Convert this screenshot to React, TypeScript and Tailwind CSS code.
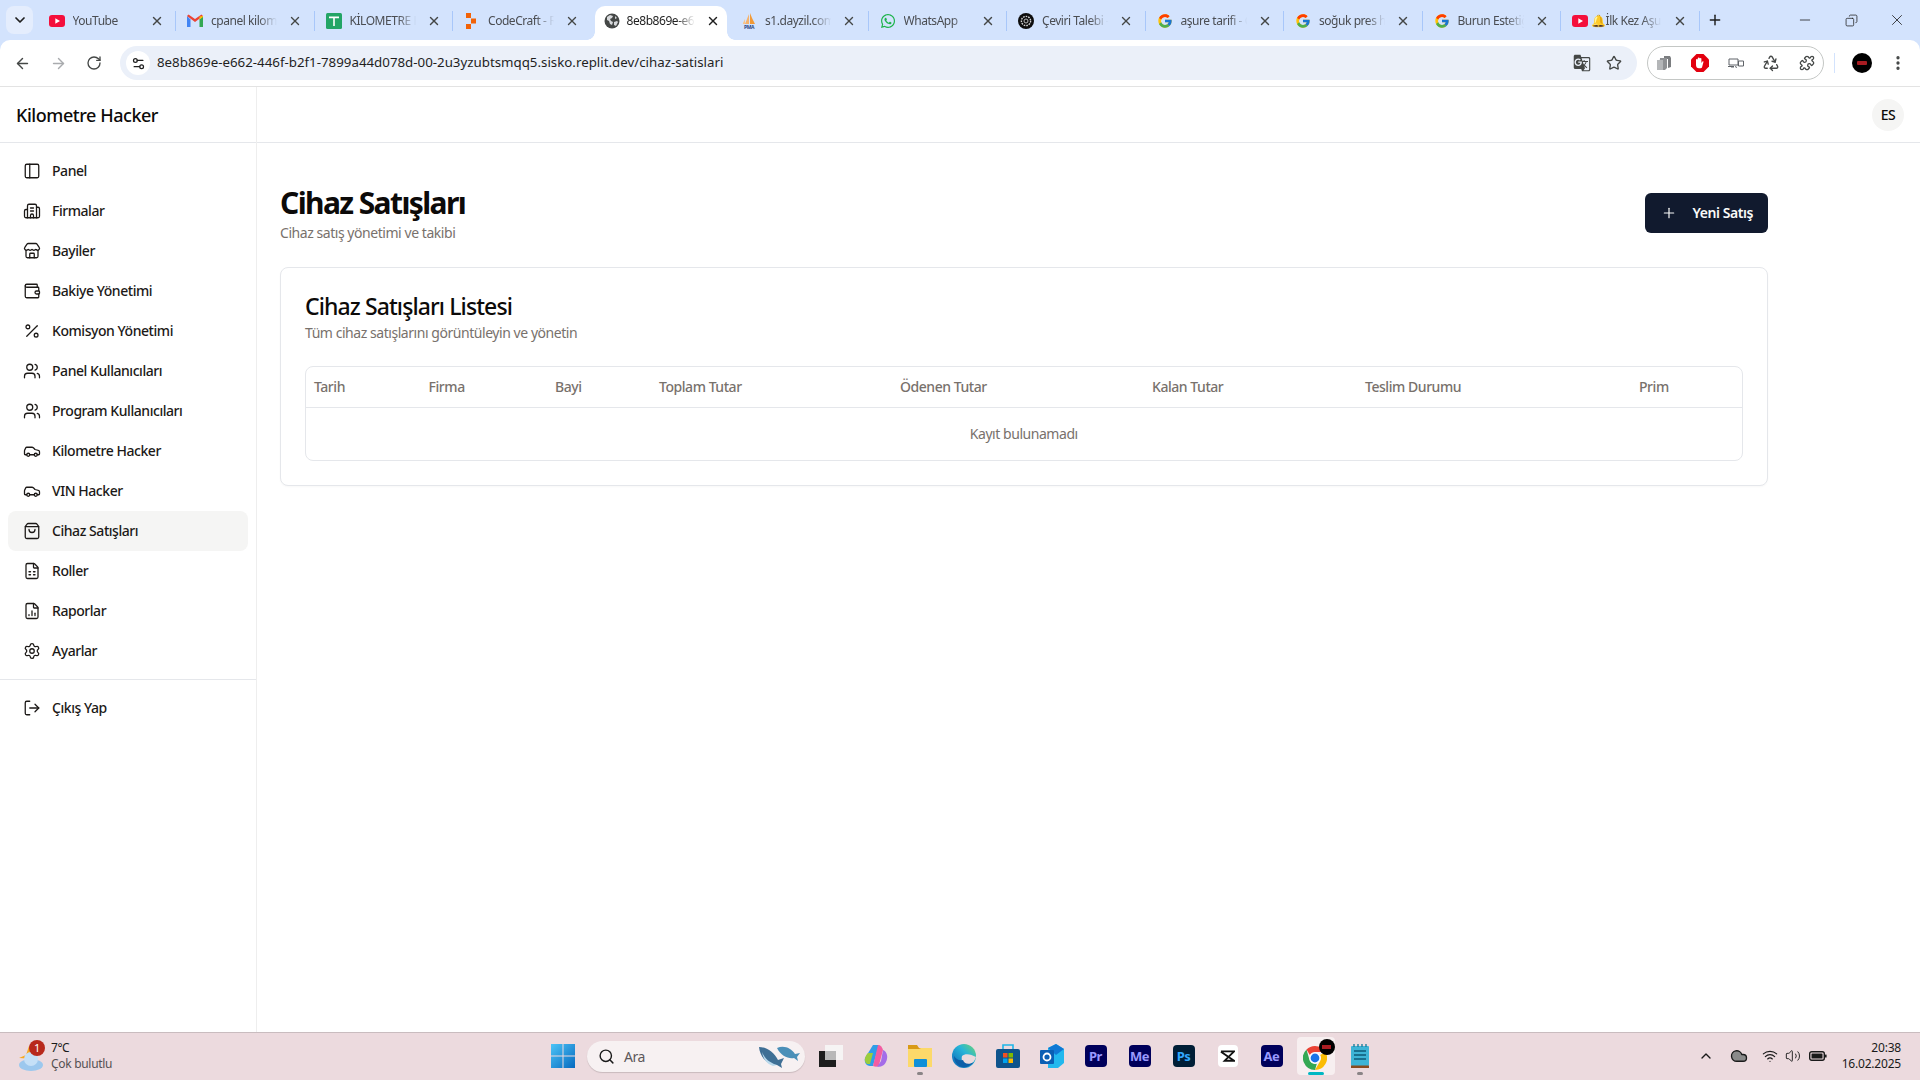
import React from "react";
import {
  ArrowLeft, ArrowRight, Building2, Car, ChevronDown, ChevronUp, Cloud, Copy, FileChartColumn, FileSpreadsheet,
  LogOut, Minus, PanelLeft, Percent, Plus, Puzzle, Recycle, RotateCw, Search, Settings, Settings2, ShoppingBag,
  Star, Store, Users, Volume2, Wallet, Wifi, X, MoreVertical,
} from "lucide-react";
import { FcGoogle } from "react-icons/fc";
import { FaWhatsapp } from "react-icons/fa";
import { MdGTranslate } from "react-icons/md";

const YouTubeIcon = () => (
  <svg viewBox="0 0 16 16" className="h-4 w-4 shrink-0">
    <rect y="2" width="16" height="12" rx="3" fill="#f40f3c" />
    <path d="M6.3 5.2v5.6L11 8z" fill="#fff" />
  </svg>
);

const GmailIcon = () => (
  <svg viewBox="0 0 16 16" className="h-4 w-4 shrink-0">
    <path d="M0 3v11h3.500V6.500z" fill="#4285f4" />
    <path d="M16 3v11h-3.500V6.500z" fill="#34a853" />
    <path d="M0 3l8 6 8-6-1.500-1.500L8 6 1.500 1.500z" fill="#ea4335" />
    <path d="M12.500 3.500L16 3v1l-3.500 2.500z" fill="#fbbc04" />
  </svg>
);

const SheetIcon = () => (
  <svg viewBox="0 0 16 16" className="h-4 w-4 shrink-0">
    <rect width="16" height="16" rx="1.500" fill="#23a566" />
    <path d="M3 3.500h10v1.700H8.800V13H7.200V5.200H3z" fill="#fff" />
  </svg>
);

const CodeCraftIcon = () => (
  <svg viewBox="0 0 16 16" className="h-4 w-4 shrink-0">
    <rect x="2" y="0" width="5" height="5" fill="#f26207" />
    <rect x="7" y="5.500" width="5" height="5" fill="#f26207" />
    <rect x="2" y="11" width="5" height="5" fill="#f26207" />
  </svg>
);

const GlobeIcon = () => (
  <svg viewBox="0 0 16 16" className="h-4 w-4 shrink-0">
    <circle cx="8" cy="8" r="7.500" fill="#444746" />
    <path d="M3 4l3-2 3 1-1 2-2 1 1 2 2 1-1 3-2-1-1-3-2-1zM10 9l3-1 1 1-2 4-2-1zM11 3l2 2-2 1z" fill="#d7d9dc" />
  </svg>
);

const PmaIcon = () => (
  <svg viewBox="0 0 16 16" className="h-4 w-4 shrink-0">
    <path d="M9 0l2 5 3 6h-5z" fill="#f29a36" />
    <path d="M8 1L6 6l-2 5h4z" fill="#f6b26b" />
    <path d="M2 10l2-4v5H2z" fill="#f8c58a" />
    <text x="8" y="15.500" textAnchor="middle" fontSize="5" fontWeight="700" fill="#2a4a86" fontFamily="Noto Sans, sans-serif">PMA</text>
  </svg>
);

const OpenAiIcon = () => (
  <svg viewBox="0 0 16 16" className="h-4 w-4 shrink-0">
    <circle cx="8" cy="8" r="8" fill="#0d0d0d" />
    <circle cx="8" cy="8" r="4.600" fill="none" stroke="#d6d6d6" strokeWidth="1.400" strokeDasharray="1.600 1" />
    <circle cx="8" cy="8" r="2" fill="none" stroke="#bdbdbd" strokeWidth="1" />
  </svg>
);

type TabData = { title: string; icon: React.ReactNode; active?: boolean; noSep?: boolean };

const tabs: TabData[] = [
  { title: "YouTube", icon: <YouTubeIcon /> },
  { title: "cpanel kilometre hacker", icon: <GmailIcon /> },
  { title: "KİLOMETRE HACKER", icon: <SheetIcon /> },
  { title: "CodeCraft - Replit", icon: <CodeCraftIcon />, noSep: true },
  { title: "8e8b869e-e662-446f", icon: <GlobeIcon />, active: true, noSep: true },
  { title: "s1.dayzil.com / phpMyAdmin", icon: <PmaIcon /> },
  { title: "WhatsApp", icon: <FaWhatsapp className="h-4 w-4 shrink-0 text-[#1cb34a]" /> },
  { title: "Çeviri Talebi - ChatGPT", icon: <OpenAiIcon /> },
  { title: "aşure tarifi - Google", icon: <FcGoogle className="h-4 w-4 shrink-0" /> },
  { title: "soğuk pres hakkında", icon: <FcGoogle className="h-4 w-4 shrink-0" /> },
  { title: "Burun Estetiği - Google", icon: <FcGoogle className="h-4 w-4 shrink-0" /> },
];

const Tab = ({ tab }: { tab: TabData }) => {
  if (tab.active) {
    return (
      <div className="relative mx-[3px] mt-[6px] flex h-[34px] w-[132.5px] shrink-0 items-center rounded-t-[10px] bg-white pb-[4px] pl-[9px] pr-[7px]">
        <div className="absolute -left-2 bottom-0 h-2 w-2 bg-[radial-gradient(circle_at_0_0,#d3e3fd_7.5px,#ffffff_8px)]" />
        <div className="absolute -right-2 bottom-0 h-2 w-2 bg-[radial-gradient(circle_at_100%_0,#d3e3fd_7.5px,#ffffff_8px)]" />
        {tab.icon}
        <span className="ml-[7px] min-w-0 flex-1 overflow-hidden whitespace-nowrap pr-[6px] text-xs text-[#1f1f1f] [mask-image:linear-gradient(to_right,black_62%,transparent_86%)]">
          {tab.title}
        </span>
        <X className="h-[14px] w-[14px] shrink-0 text-[#1f1f1f]" strokeWidth={2.4} />
      </div>
    );
  }
  return (
    <div className="flex h-10 w-[138.5px] shrink-0 items-center pl-[11px] pt-[1px]">
      {tab.icon}
      <span className="ml-2 min-w-0 flex-1 overflow-hidden whitespace-nowrap pr-[6px] text-xs text-[#4a4d52] [mask-image:linear-gradient(to_right,black_62%,transparent_86%)]">
        {tab.title}
      </span>
      <X className="h-[14px] w-[14px] shrink-0 text-[#444746]" strokeWidth={2.4} />
      <div className="ml-[11.5px] flex w-px justify-end">
        {!tab.noSep && <div className="h-[20px] w-px shrink-0 bg-[#a8c7fa]" />}
      </div>
    </div>
  );
};

const TabStrip = () => (
  <div className="flex h-10 items-start bg-[#d3e3fd]">
    <div className="ml-[6px] mr-[4.5px] mt-[6px] flex h-[28px] w-[27px] items-center justify-center rounded-lg bg-[#e4edfd]">
      <ChevronDown className="h-4 w-4 text-[#1f1f1f]" strokeWidth={2.6} />
    </div>
    {tabs.map((t) => (
      <Tab key={t.title} tab={t} />
    ))}
    <div className="flex h-10 w-[138.5px] shrink-0 items-center pl-[11px] pt-[1px]">
      <YouTubeIcon />
      <span className="ml-[3px] min-w-0 flex-1 overflow-hidden whitespace-nowrap pr-[6px] text-xs text-[#4a4d52] [mask-image:linear-gradient(to_right,black_62%,transparent_86%)]">
        🔔İlk Kez Aşure Yaptım
      </span>
      <X className="h-[14px] w-[14px] shrink-0 text-[#444746]" strokeWidth={2.4} />
      <div className="ml-[11.5px] h-[20px] w-px shrink-0 bg-[#a8c7fa]" />
    </div>
    <div className="ml-[5px] flex h-10 w-[20px] items-center justify-center">
      <Plus className="h-4 w-4 text-[#1f1f1f]" strokeWidth={2.2} />
    </div>
    <div className="ml-auto flex h-10">
      <div className="flex w-[46px] items-center justify-center"><Minus className="h-4 w-4 text-[#1f1f1f]" strokeWidth={1.2} /></div>
      <div className="flex w-[46px] items-center justify-center"><Copy className="h-[13px] w-[13px] -scale-x-100 text-[#1f1f1f]" strokeWidth={1.4} /></div>
      <div className="flex w-[46px] items-center justify-center"><X className="h-[18px] w-[18px] text-[#1f1f1f]" strokeWidth={1.1} /></div>
    </div>
  </div>
);

const StopIcon = () => (
  <svg viewBox="0 0 18 18" className="h-[18px] w-[18px]">
    <path d="M5.500 0h7L18 5.500v7L12.500 18h-7L0 12.500v-7z" fill="#e3000f" />
    <path d="M5 9V5.500a1 1 0 0 1 1.800 0V8V4a1 1 0 0 1 1.800 0v4V4.500a1 1 0 0 1 1.800 0V9l1-1.500c.6-.6 1.400 0 1 .7L11 13.500a2 2 0 0 1-1.500.8H8C6 14.300 5 13 5 11z" fill="#fff" />
  </svg>
);

const StackIcon = () => (
  <svg viewBox="0 0 16 16" className="h-4 w-4">
    <path d="M8 1h6l1 2v9l-3 1V4H8z" fill="#7b7d80" />
    <path d="M4 3h7v10l-2 2H3z" fill="#8f9194" />
    <path d="M1 5h6v10H1z" fill="#b4b6b8" />
  </svg>
);

const DeviceIcon = () => (
  <svg viewBox="0 0 16 12" className="h-[12px] w-[16px]" fill="none" stroke="#5f6368" strokeWidth="1">
    <path d="M1 2h9v6H1zM0 9.500h6" />
    <path d="M10.500 4h5v5h-5zM3 10h3M7 9.500l2 1" />
  </svg>
);

const Toolbar = () => (
  <div className="bg-[#d3e3fd]">
    <div className="flex h-[47px] items-start rounded-t-[10px] border-b border-[#e3e3e3] bg-white pt-[6px]">
      <div className="flex h-[34px] w-[116px] shrink-0 items-center justify-between px-[14px]">
        <ArrowLeft className="h-[17px] w-[17px] text-[#444746]" strokeWidth={2} />
        <ArrowRight className="h-[17px] w-[17px] text-[#a9abae]" strokeWidth={2} />
        <RotateCw className="h-4 w-4 text-[#444746]" strokeWidth={2} />
      </div>
      <div className="ml-[4px] flex h-[34px] w-[1517px] shrink-0 items-center rounded-full bg-[#ebf0f9] pl-[6px] pr-[15px]">
        <div className="flex h-[24px] w-[24px] items-center justify-center rounded-full bg-white">
          <Settings2 className="h-[15px] w-[15px] text-[#1f1f1f]" strokeWidth={2} />
        </div>
        <span className="ml-[7px] whitespace-nowrap text-[13.3px] tracking-normal text-[#1f1f1f]">
          8e8b869e-e662-446f-b2f1-7899a44d078d-00-2u3yzubtsmqq5.sisko.replit.dev/cihaz-satislari
        </span>
        <MdGTranslate className="ml-auto h-[18px] w-[18px] text-[#444746]" />
        <Star className="ml-[15px] h-4 w-4 text-[#444746]" strokeWidth={2} />
      </div>
      <div className="ml-[10px] flex h-[34px] w-[177px] shrink-0 items-center justify-between rounded-full border border-[#c4c7c5] px-[8px]">
        <StackIcon />
        <StopIcon />
        <DeviceIcon />
        <Recycle className="h-[18px] w-[18px] text-[#444746]" strokeWidth={1.8} />
        <Puzzle className="h-4 w-4 text-[#444746]" strokeWidth={2} />
      </div>
      <div className="ml-[10px] mt-[7px] h-[20px] w-px shrink-0 bg-[#d3e3fd]" />
      <div className="ml-[17px] mt-[7px] flex h-[20px] w-[20px] shrink-0 items-center justify-center rounded-full bg-black">
        <div className="h-[4px] w-[10px] rounded-[1px] bg-[#a81c22]" />
      </div>
      <MoreVertical className="ml-[17px] mt-[8px] h-[18px] w-[18px] shrink-0 text-[#444746]" strokeWidth={2.4} />
    </div>
  </div>
);

const navItems = [
  { label: "Panel", icon: PanelLeft },
  { label: "Firmalar", icon: Building2 },
  { label: "Bayiler", icon: Store },
  { label: "Bakiye Yönetimi", icon: Wallet },
  { label: "Komisyon Yönetimi", icon: Percent },
  { label: "Panel Kullanıcıları", icon: Users },
  { label: "Program Kullanıcıları", icon: Users },
  { label: "Kilometre Hacker", icon: Car },
  { label: "VIN Hacker", icon: Car },
  { label: "Cihaz Satışları", icon: ShoppingBag, active: true },
  { label: "Roller", icon: FileSpreadsheet },
  { label: "Raporlar", icon: FileChartColumn },
  { label: "Ayarlar", icon: Settings },
];

const NavItem = ({ label, icon: Icon, active }: { label: string; icon: typeof Store; active?: boolean }) => (
  <div className={`flex h-10 items-center gap-[11px] rounded-lg pl-[15px] text-sm font-medium text-[#1c1917] ${active ? "bg-[#f5f5f4]" : ""}`}>
    <Icon className="h-[18px] w-[18px] shrink-0" strokeWidth={1.7} />
    {label}
  </div>
);

const Sidebar = () => (
  <aside className="flex w-[257px] shrink-0 flex-col border-r border-[#eeeeee]">
    <div className="flex h-[56px] items-center border-b border-[#e5e7eb] pl-4 text-lg font-medium text-[#0c0a09]">Kilometre Hacker</div>
    <nav className="flex flex-col p-2">
      {navItems.map((n) => (
        <NavItem key={n.label} label={n.label} icon={n.icon} active={n.active} />
      ))}
    </nav>
    <div className="border-t border-[#e5e7eb] p-2">
      <NavItem label="Çıkış Yap" icon={LogOut} />
    </div>
  </aside>
);

const columns = [
  { label: "Tarih", width: "w-[114.6px]" },
  { label: "Firma", width: "w-[126.4px]" },
  { label: "Bayi", width: "w-[104px]" },
  { label: "Toplam Tutar", width: "w-[241px]" },
  { label: "Ödenen Tutar", width: "w-[252px]" },
  { label: "Kalan Tutar", width: "w-[213px]" },
  { label: "Teslim Durumu", width: "w-[274px]" },
  { label: "Prim", width: "" },
];

const SalesTable = () => (
  <div className="overflow-hidden rounded-lg border border-[#e5e7eb]">
    <table className="w-full table-fixed text-sm">
      <thead>
        <tr className="border-b border-[#e5e7eb]">
          {columns.map((c) => (
            <th key={c.label} className={`h-10 px-2 text-left font-medium text-[#78716c] ${c.width}`}>
              {c.label}
            </th>
          ))}
        </tr>
      </thead>
      <tbody>
        <tr>
          <td colSpan={8} className="h-[53px] text-center text-[#78716c]">
            Kayıt bulunamadı
          </td>
        </tr>
      </tbody>
    </table>
  </div>
);

const Content = () => (
  <div className="flex min-w-0 flex-1 flex-col">
    <header className="flex h-[56px] items-center justify-end border-b border-[#e5e7eb] pr-4">
      <div className="flex h-8 w-8 items-center justify-center rounded-full bg-[#f5f5f4] text-sm font-medium text-[#0c0a09]">ES</div>
    </header>
    <main className="w-[1510.5px] pl-[23px] pt-[42px]">
      <div className="mb-6 flex items-center justify-between">
        <div>
          <h1 className="text-3xl font-bold tracking-[-1.6px] text-[#0c0a09]">Cihaz Satışları</h1>
          <p className="mt-[2px] text-sm text-[#78716c]">Cihaz satış yönetimi ve takibi</p>
        </div>
        <button className="mb-[2px] flex h-10 w-[123px] items-center gap-4 rounded-md bg-[#111a2e] pl-4 text-sm font-semibold text-[#fafaf9]">
          <Plus className="h-4 w-4" strokeWidth={1.8} />
          Yeni Satış
        </button>
      </div>
      <div className="rounded-lg border border-[#e5e7eb] bg-white p-6 shadow-[0_1px_2px_rgba(0,0,0,0.03)]">
        <h2 className="-mt-[2px] text-[23px] font-medium leading-8 tracking-[-0.9px] text-[#0c0a09]">Cihaz Satışları Listesi</h2>
        <p className="mt-[1px] text-sm text-[#78716c]">Tüm cihaz satışlarını görüntüleyin ve yönetin</p>
        <div className="mt-[23px]">
          <SalesTable />
        </div>
      </div>
    </main>
  </div>
);

const WeatherIcon = () => (
  <div className="relative h-[34px] w-[26px] shrink-0">
    <svg viewBox="0 0 26 30" className="absolute left-0 top-[3px] h-[30px] w-[26px]">
      <path d="M1 16l7-3 3-9 7 3v10z" fill="#f6a821" />
      <ellipse cx="13" cy="23" rx="12" ry="6" fill="#9cc8ee" />
      <circle cx="13" cy="17" r="7" fill="#c5e0f7" />
    </svg>
    <div className="absolute left-[11px] top-[1px] flex h-4 w-4 items-center justify-center rounded-full bg-[#b8291c] text-[11px] text-white">1</div>
  </div>
);

const WindowsLogo = () => (
  <svg viewBox="0 0 24 24" className="h-6 w-6">
    <defs>
      <linearGradient id="win" x1="0" y1="0" x2="1" y2="1">
        <stop offset="0" stopColor="#4cc4f7" />
        <stop offset="1" stopColor="#0669bf" />
      </linearGradient>
    </defs>
    <path d="M0 0h11.500v11.500H0zM12.500 0H24v11.500H12.500zM0 12.500h11.500V24H0zM12.500 12.500H24V24H12.500z" fill="url(#win)" />
  </svg>
);

const Whales = () => (
  <svg viewBox="0 0 44 24" className="h-[24px] w-[44px]">
    <path d="M2 3c8 0 15 5 19 13l6-2-3 6 1 4-5-3C10 21 3 13 2 3z" fill="#3f6f95" />
    <path d="M5 8c3 7 8 11 15 13l-4 1C10 20 6 15 5 8z" fill="#b9d9ec" />
    <path d="M20 4c7-3 14 0 18 6l5-1-3 4 1 4-4-3c-6 1-13-2-17-10z" fill="#4a8fb8" />
  </svg>
);

const AppTile = ({ label, bg, color }: { label: string; bg: string; color: string }) => (
  <div className={`flex h-[22px] w-[22px] items-center justify-center rounded-[4px] text-[13px] font-bold leading-none ${bg} ${color}`}>{label}</div>
);

const TaskApp = ({ children, open, active }: { children: React.ReactNode; open?: boolean; active?: boolean }) => (
  <div className={`relative flex h-[38px] w-[38px] items-center justify-center rounded-[4px] ${active ? "bg-[#f7eff0]" : ""}`}>
    {children}
    {open && <div className="absolute bottom-0 h-[3px] w-[6px] rounded-full bg-[#8a8486]" />}
    {active && <div className="absolute bottom-0 h-[3px] w-[16px] rounded-full bg-[#00b7c3]" />}
  </div>
);

const TaskView = () => (
  <svg viewBox="0 0 24 24" className="h-[24px] w-[24px] -translate-x-[1px]">
    <rect x="0" y="7" width="17" height="16" fill="#1d1d1d" />
    <rect x="6" y="1" width="18" height="15" fill="#f6f4f4" />
    <rect x="6" y="7" width="11" height="9" fill="#b8b8b8" />
  </svg>
);

const Copilot = () => (
  <svg viewBox="0 0 24 24" className="h-6 w-6">
    <path d="M9 1h6L9 22H6C2 22 0 18 1 14z" fill="#2f9ee8" />
    <path d="M4 9h5l-3 11H3C0 18 0 13 4 9z" fill="#9ccc3c" />
    <path d="M14 1c3 0 4 2 5 5l-4 15c-1 2-3 2-6 1z" fill="#f25da2" />
    <path d="M19 6c3 1 5 5 4 9-1 5-4 8-10 8l4-6z" fill="#a46ce8" />
  </svg>
);

const Folder = () => (
  <svg viewBox="0 0 24 24" className="h-6 w-6">
    <path d="M0 1h9l2 3h13v19H0z" fill="#d99a17" />
    <path d="M0 5h11l2-1h11v19H0z" fill="#fcd96a" />
    <rect x="6" y="15" width="13" height="8" rx="1" fill="#0f8fd8" />
  </svg>
);

const Edge = () => (
  <svg viewBox="0 0 24 24" className="h-6 w-6">
    <defs>
      <linearGradient id="edge" x1="0" y1="1" x2="1" y2="0">
        <stop offset="0" stopColor="#0b63b6" />
        <stop offset="0.6" stopColor="#28b5d8" />
        <stop offset="1" stopColor="#6fd66c" />
      </linearGradient>
    </defs>
    <circle cx="12" cy="12" r="12" fill="url(#edge)" />
    <path d="M10 12c3-3 9-2 14 1-1 3-3 6-6 8-4 1-7-1-8-4-.4-2-.4-3.500 0-5z" fill="#eadadd" />
    <path d="M11 16c1 4 6 5 11 2-3 4-8 6-12 5-5-1-8-6-8-11 2 3 5 5 9 4z" fill="#0d5fa8" />
  </svg>
);

const MsStore = () => (
  <svg viewBox="0 0 24 24" className="h-6 w-6">
    <path d="M7 5V1h10v4" fill="none" stroke="#1fb6e8" strokeWidth="1.600" />
    <rect y="5" width="24" height="19" rx="2" fill="#0f548c" />
    <rect x="7" y="9" width="4.500" height="4.500" fill="#f25022" />
    <rect x="12.500" y="9" width="4.500" height="4.500" fill="#7fba00" />
    <rect x="7" y="14.500" width="4.500" height="4.500" fill="#00a4ef" />
    <rect x="12.500" y="14.500" width="4.500" height="4.500" fill="#ffb900" />
  </svg>
);

const Outlook = () => (
  <svg viewBox="0 0 24 24" className="h-6 w-6">
    <path d="M8 4l8-4 8 5v14l-6 5H8z" fill="#22b8ee" />
    <path d="M8 4l8-4 8 5-8 6z" fill="#0f78d4" />
    <rect y="6" width="14" height="14" rx="1" fill="#0a5fb4" />
    <circle cx="7" cy="13" r="3.500" fill="none" stroke="#fff" strokeWidth="1.800" />
  </svg>
);

const CapCut = () => (
  <div className="flex h-[22px] w-[20px] items-center justify-center rounded-[4px] bg-white">
    <svg viewBox="0 0 16 12" className="h-[12px] w-[15px]">
      <path d="M1 1h14L5 11H15L1 1.500" fill="none" stroke="#111" strokeWidth="2" />
    </svg>
  </div>
);

const ChromeIcon = () => (
  <div className="relative h-[26px] w-[26px]">
    <svg viewBox="0 0 24 24" className="h-[24px] w-[24px] translate-y-[3px]">
      <path d="M12 0a12 12 0 0 1 10.400 6H12a6 6 0 0 0-5.200 3L3.500 3.500A12 12 0 0 1 12 0z" fill="#ea4335" />
      <path d="M22.400 6A12 12 0 0 1 12 24l5.200-9a6 6 0 0 0 0-6z" fill="#fbbc04" />
      <path d="M12 24A12 12 0 0 1 3.500 3.500L6.800 15a6 6 0 0 0 7 2.700z" fill="#34a853" />
      <circle cx="12" cy="12" r="5" fill="#1a73e8" stroke="#fff" strokeWidth="1.200" />
    </svg>
    <div className="absolute -right-[6px] -top-[4px] flex h-4 w-4 items-center justify-center rounded-full bg-black">
      <div className="h-[4px] w-[9px] bg-[#a81c22]" />
    </div>
  </div>
);

const Notepad = () => (
  <svg viewBox="0 0 18 24" className="h-[24px] w-[18px]">
    <rect y="2" width="18" height="20" rx="1" fill="#3eb4d6" />
    <path d="M3 0v3M7 0v3M11 0v3M15 0v3" stroke="#1f7f9e" strokeWidth="1.400" />
    <path d="M3 7h12M3 11h12M3 15h12" stroke="#0e5a78" strokeWidth="1.400" />
    <rect y="21.500" width="18" height="2.500" fill="#8a4b1f" />
  </svg>
);

const BatteryIcon = () => (
  <svg viewBox="0 0 18 12" className="ml-[8px] h-[12px] w-[18px]">
    <rect x="0.700" y="1.700" width="14.600" height="8.600" rx="2" fill="none" stroke="#1a1a1a" strokeWidth="1.400" />
    <rect x="2.500" y="3.500" width="11" height="5" rx="0.500" fill="#1a1a1a" />
    <rect x="16" y="4.500" width="1.600" height="3" rx="0.500" fill="#1a1a1a" />
  </svg>
);

const Taskbar = () => (
  <div className="flex h-[48px] shrink-0 items-center border-t border-[#c9bcbf] bg-[#ecdade] pb-[1px]">
    <div className="ml-[18px] flex w-[533px] items-center gap-[7px]">
      <WeatherIcon />
      <div className="flex flex-col text-xs leading-4">
        <span className="text-[#1a1a1a]">7°C</span>
        <span className="tracking-[-0.3px] text-[#555052]">Çok bulutlu</span>
      </div>
    </div>
    <div className="w-[36px]">
      <WindowsLogo />
    </div>
    <div className="flex h-[31px] w-[218px] items-center rounded-full bg-[#f7f1f2] pl-[11px] pr-[4px] shadow-[0_1px_1px_rgba(0,0,0,0.15)]">
      <Search className="h-[17px] w-[17px] text-[#1a1a1a]" strokeWidth={2} />
      <span className="ml-[9px] text-[14px] text-[#5c585a]">Ara</span>
      <div className="ml-auto">
        <Whales />
      </div>
    </div>
    <div className="flex w-[580px] items-center gap-[6px] pl-[7.5px]">
      <TaskApp><TaskView /></TaskApp>
      <TaskApp><Copilot /></TaskApp>
      <TaskApp open><Folder /></TaskApp>
      <TaskApp><Edge /></TaskApp>
      <TaskApp><MsStore /></TaskApp>
      <TaskApp><Outlook /></TaskApp>
      <TaskApp><AppTile label="Pr" bg="bg-[#00005b]" color="text-[#9999ff]" /></TaskApp>
      <TaskApp><AppTile label="Me" bg="bg-[#00005b]" color="text-[#9999ff]" /></TaskApp>
      <TaskApp><AppTile label="Ps" bg="bg-[#001e36]" color="text-[#31a8ff]" /></TaskApp>
      <TaskApp><CapCut /></TaskApp>
      <TaskApp><AppTile label="Ae" bg="bg-[#00005b]" color="text-[#9999ff]" /></TaskApp>
      <TaskApp active><ChromeIcon /></TaskApp>
      <TaskApp open><Notepad /></TaskApp>
    </div>
    <div className="ml-auto flex items-center pr-[19px] text-[#1a1a1a]">
      <ChevronUp className="h-4 w-4" strokeWidth={2} />
      <Cloud className="ml-[16px] h-[18px] w-[18px] fill-[#8a8a8a]" strokeWidth={1.8} />
      <Wifi className="ml-[14px] h-4 w-4" strokeWidth={1.8} />
      <Volume2 className="ml-[7px] h-4 w-4" strokeWidth={1.4} />
      <BatteryIcon />
      <div className="ml-[15px] flex flex-col items-end text-xs leading-4 tracking-[-0.2px]">
        <span>20:38</span>
        <span>16.02.2025</span>
      </div>
    </div>
  </div>
);

const App = () => {
  return (
    <div className="flex h-[1080px] w-[1920px] flex-col overflow-hidden bg-white font-['Noto_Sans',sans-serif] tracking-[-0.45px]">
      <TabStrip />
      <Toolbar />
      <div className="flex min-h-0 flex-1">
        <Sidebar />
        <Content />
      </div>
      <Taskbar />
    </div>
  );
};

export default App;
